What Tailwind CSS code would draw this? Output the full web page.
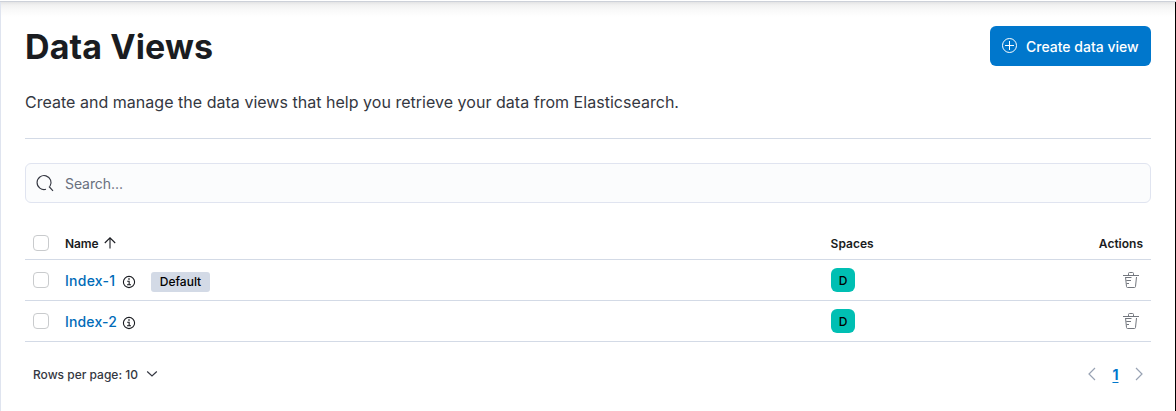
<!DOCTYPE html>
<html lang="en">
<head>
<meta charset="utf-8">
<title>Data Views</title>
<script src="https://cdn.jsdelivr.net/npm/@tailwindcss/browser@4"></script>
</head>
<body class="h-[411px] overflow-hidden bg-white font-['Inter',sans-serif] text-[#343741]">
<svg class="hidden">
  <symbol id="info" viewBox="0 0 14 14"><circle cx="7" cy="7" r="5.600" fill="none" stroke="currentColor" stroke-width="1.100"/><path fill="currentColor" d="M6.300 3.300h1.400v1.400H6.300zM5.200 5.800h2.500v3.500H9v1H5v-1h1.600V6.800H5.200z"/></symbol>
  <symbol id="trash" viewBox="0 0 16 16"><path fill="none" stroke="currentColor" d="M0 3.500h16M5.500 3.500v-2q0-1 1-1h3q1 0 1 1v2M2.500 5l1 9.500q.1 1 1 1h7q.9 0 1-1l1-9.500M3 5.500h5.500M3.300 8.500H8M3.500 11.500H6"/></symbol>
</svg>
<div class="flex h-full flex-col">
  <div class="h-px shrink-0"></div>
  <div class="h-px shrink-0 bg-[#cdd1d9]"></div>
  <div class="flex min-h-0 flex-1 flex-col border-l border-r border-l-[#dfe4ef] border-r-black bg-[linear-gradient(to_bottom,#e3e3e4_0,#f1f1f1_3px,#f9f9f9_8px,#fff_15px)] px-6 pt-6">
    <header class="flex h-10 items-center justify-between">
      <h1 class="pt-0.5 text-[34px] leading-10 font-bold tracking-[0.1px] text-[#1a1c21]">Data Views</h1>
      <button class="flex h-10 w-[161px] items-center rounded-md bg-[#0077cc] pl-3 text-sm font-medium text-white">
        <svg class="mr-2 size-4" viewBox="0 0 16 16" fill="none" stroke="currentColor"><circle cx="7.500" cy="7.500" r="7"/><path d="M3 7.500h9M7.500 3v9"/></svg>
        <span class="pt-0.5">Create data view</span>
      </button>
    </header>
    <p class="mt-6 h-6 text-base leading-6 tracking-[0.024px]">Create and manage the data views that help you retrieve your data from Elasticsearch.</p>
    <hr class="my-6 h-px border-0 bg-[#d3dae6]">
    <div class="flex h-10 items-center rounded-md border border-[#e0e4f0] bg-[#fbfcfd] pl-[11px] text-sm text-[#69707d]">
      <svg class="mr-3 size-4 overflow-visible text-[#343741]" viewBox="0 0 16 16" fill="none" stroke="currentColor" stroke-width="1.150"><path d="M9 14.300A7 7 0 1 1 13 11.300M12 11.500L16 15.800"/></svg>
      <span class="pt-0.5 tracking-[-0.08px]">Search...</span>
    </div>
    <div class="mt-6 text-sm">
      <div class="flex h-[33px] items-center border-b border-[#d3dae6] pr-2 pl-2 text-xs font-semibold text-[#1a1c21]">
        <span class="mr-4 size-4 rounded border border-[#c9cbcd]"></span>
        <span class="flex w-[765.600px] items-center"><span class="pt-px tracking-[-0.1px]">Name</span>
          <svg class="ml-[5.500px] size-3" viewBox="0 0 12 12" fill="none" stroke="currentColor" stroke-width="1.100"><path d="M6 11.500V1M.8 6 6 .8 11.200 6"/></svg>
        </span>
        <span class="pt-px">Spaces</span><span class="ml-auto pt-px">Actions</span>
      </div>
      <div class="flex h-[41px] items-center border-b border-[#d3dae6] px-2">
        <span class="mr-4 size-4 rounded border border-[#c9cbcd]"></span>
        <span class="flex w-[766px] items-center text-[#006bb8]"><span class="w-[51px] pt-0.5 font-medium tracking-[0.26px] whitespace-nowrap">Index-1</span>
          <svg class="mt-[3px] ml-1.5 size-3.5 text-[#1a1c21]"><use href="#info"/></svg>
          <span class="mt-[3px] ml-[15px] flex h-5 w-[59px] items-center justify-center rounded-[3px] bg-[#d3dae6] text-xs font-medium text-black">Default</span>
        </span>
        <span class="flex size-6 items-center justify-center rounded-md bg-[#00bfb3] pt-px text-xs font-medium text-black">D</span>
        <svg class="mr-1 ml-auto size-4 text-[#73777e]"><use href="#trash"/></svg>
      </div>
      <div class="flex h-[41px] items-center border-b border-[#d3dae6] px-2">
        <span class="mr-4 size-4 rounded border border-[#c9cbcd]"></span>
        <span class="flex w-[766px] items-center text-[#006bb8]"><span class="w-[51px] pt-0.5 font-medium tracking-[0.15px] whitespace-nowrap">Index-2</span>
          <svg class="mt-[3px] ml-1.5 size-3.5 text-[#1a1c21]"><use href="#info"/></svg>
        </span>
        <span class="flex size-6 items-center justify-center rounded-md bg-[#00bfb3] pt-px text-xs font-medium text-black">D</span>
        <svg class="mr-1 ml-auto size-4 text-[#73777e]"><use href="#trash"/></svg>
      </div>
    </div>
    <footer class="mt-5 flex h-6 items-center pr-2 pl-2 text-xs font-medium">
      <span class="pt-px">Rows per page: 10</span>
      <svg class="ml-2 size-3" viewBox="0 0 12 12" fill="none" stroke="currentColor" stroke-width="1.200"><path d="m1.200 3.500 4.800 4.500 4.800-4.500"/></svg>
      <span class="ml-auto flex items-center text-[#98a2b3]">
        <svg class="h-3.5 w-2" viewBox="0 0 8 14" fill="none" stroke="currentColor" stroke-width="1.200"><path d="m7 1-6 6 6 6"/></svg>
        <span class="w-[39px] pt-0.5 text-center text-sm font-bold text-[#0077cc] underline underline-offset-2">1</span>
        <svg class="h-3.5 w-2" viewBox="0 0 8 14" fill="none" stroke="currentColor" stroke-width="1.200"><path d="m1 1 6 6-6 6"/></svg>
      </span>
    </footer>
  </div>
</div>
</body>
</html>
